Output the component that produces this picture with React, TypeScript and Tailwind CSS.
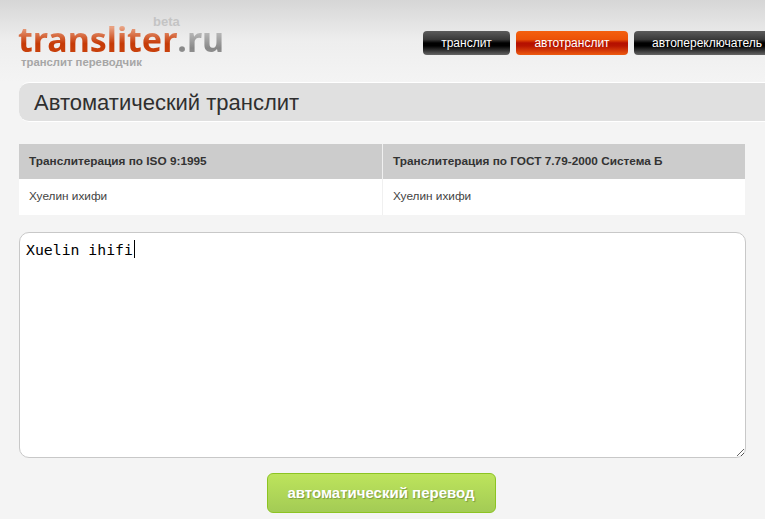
const navItems = [
  { label: 'транслит', active: false, width: 'w-[87px]' },
  { label: 'автотранслит', active: true, width: 'w-[112px]' },
  { label: 'автопереключатель', active: false, width: 'w-[146px]' },
];

function NavButton({ label, active, width }: { label: string; active: boolean; width: string }) {
  return (
    <a
      className={`flex h-6 shrink-0 items-center justify-center rounded-[4px] text-xs text-white ${width} ${
        active
          ? 'bg-[linear-gradient(#f4600f_0%,#ec5207_35%,#b50f00_50%,#b81500_62%,#ee5a10_100%)]'
          : 'bg-[linear-gradient(#5c5c5c_0%,#3a3a3a_35%,#000_50%,#000_62%,#666_100%)]'
      }`}
    >
      {label}
    </a>
  );
}

export default function App() {
  return (
    <div className="h-[519px] w-[765px] overflow-hidden bg-[#f4f4f4] font-['Liberation_Sans',sans-serif]">
      {/* Header */}
      <div className="flex h-[82px] bg-[linear-gradient(#d6d6d6_0%,#eeeeee_50%,#f4f4f4_100%)] pl-[18px]">
        <div className="relative w-[207px] shrink-0 pt-[21px]">
          <span className="absolute left-[135px] top-[15px] text-[13px] font-bold leading-none text-[#c4c4c4]">beta</span>
          <div className="whitespace-nowrap font-['Noto_Sans',sans-serif] text-[34px] font-bold leading-[36px]">
            <span className="-mr-[2px] bg-[linear-gradient(#e8a080_25%,#c63a06_60%,#cc4a14_100%)] bg-clip-text pr-[2px] text-transparent">transliter</span>
            <span className="bg-[linear-gradient(#c8c8c8_25%,#888888_70%,#a0a0a0_100%)] bg-clip-text text-transparent">.ru</span>
          </div>
          <div className="whitespace-nowrap pl-[3px] text-[11.3px] font-bold leading-none text-[#a6a6a6]">транслит переводчик</div>
        </div>
        <div className="ml-[198px] flex shrink-0 gap-1.5 pt-[31px]">
          {navItems.map((item) => (
            <NavButton key={item.label} {...item} />
          ))}
        </div>
      </div>

      {/* Title */}
      <div className="ml-[19px] flex h-10 w-[760px] items-center rounded-l-[10px] border-y border-white bg-[#e0e0e0] pl-[15px]">
        <h1 className="text-[22px] text-[#2f2f2f]">Автоматический транслит</h1>
      </div>

      {/* Results table */}
      <div className="ml-[19px] mt-[22px] grid w-[726px] grid-cols-[364px_362px] text-[11.8px]">
        <div className="flex h-[35px] items-center border-r border-[#f0f0f0] bg-[#cccccc] pl-[10px] font-bold text-[#333]">
          Транслитерация по ISO 9:1995
        </div>
        <div className="flex h-[35px] items-center bg-[#cccccc] pl-[10px] font-bold text-[#333]">
          Транслитерация по ГОСТ 7.79-2000 Система Б
        </div>
        <div className="flex h-9 items-center border-r border-[#f0f0f0] bg-white pl-[10px] text-[#444]">Хуелин ихифи</div>
        <div className="flex h-9 items-center bg-white pl-[10px] text-[#444]">Хуелин ихифи</div>
      </div>

      {/* Input */}
      <div className="relative ml-[19px] mt-[17px] h-[226px] w-[727px]">
        <textarea
          defaultValue="Xuelin ihifi"
          className="block h-full w-full resize rounded-[10px] border border-[#c8c8c8] bg-white px-[6px] py-[7px] font-['DejaVu_Sans_Mono',monospace] text-[14.8px] leading-[20px] text-black outline-none"
        />
        <span className="absolute left-[115px] top-[8px] h-[18px] w-px bg-black" />
      </div>

      {/* Submit */}
      <div className="mt-[15px] flex justify-center pr-[3px]">
        <button className="h-10 w-[229px] rounded-[6px] border border-[#8cc422] bg-[linear-gradient(#bde45c,#a3cb55)] text-[15px] font-bold text-white [text-shadow:1px_1px_1px_#7a9a40]">
          автоматический перевод
        </button>
      </div>
    </div>
  );
}
